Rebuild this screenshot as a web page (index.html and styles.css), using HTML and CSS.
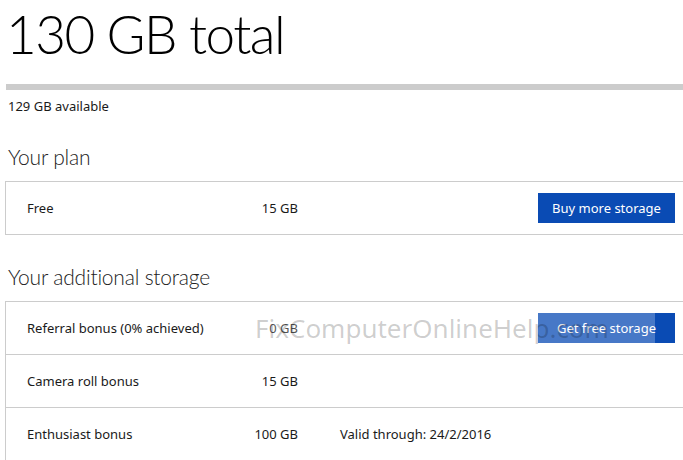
FILE: index.html
```html
<!DOCTYPE html>
<html lang="en">
<head>
  <meta charset="UTF-8">
  <title>Storage</title>
  <link rel="stylesheet" href="styles.css">
</head>
<body>
  <h1 class="total">130 GB total</h1>
  <div class="meter"><div class="meter-fill"></div></div>
  <p class="available">129 GB available</p>

  <h2 class="section-title">Your plan</h2>
  <div class="box">
    <div class="row">
      <span class="label">Free</span>
      <span class="amount">15 GB</span>
      <span class="extra"></span>
      <button class="action">Buy more storage</button>
    </div>
  </div>

  <h2 class="section-title">Your additional storage</h2>
  <div class="box">
    <div class="row">
      <span class="label">Referral bonus (0% achieved)</span>
      <span class="amount">0 GB</span>
      <span class="extra"></span>
      <button class="action">Get free storage</button>
    </div>
    <div class="row">
      <span class="label">Camera roll bonus</span>
      <span class="amount">15 GB</span>
      <span class="extra"></span>
    </div>
    <div class="row">
      <span class="label">Enthusiast bonus</span>
      <span class="amount">100 GB</span>
      <span class="extra">Valid through: 24/2/2016</span>
    </div>
  </div>

  <div class="watermark">FixComputerOnlineHelp.com</div>
</body>
</html>
```

FILE: styles.css
```css
html, body {
  overflow: hidden;
}

body {
  margin: 0;
  width: 683px;
  height: 460px;
  position: relative;
  font-family: "Noto Sans", "Open Sans", sans-serif;
  color: #1a1a1a;
  background: #fff;
}

.total {
  margin: 0;
  padding: 2px 0 0 6px;
  font-family: "Lato Light", "Lato", sans-serif;
  font-size: 53px;
  font-weight: 300;
  line-height: 64px;
  letter-spacing: -1.5px;
  color: #000;
}

.meter {
  margin: 18px 0 0 6px;
  height: 6px;
  width: 700px;
  background: #cccccc;
}

.available {
  margin: 7px 0 0 8px;
  font-size: 13px;
  line-height: 18px;
}

.section-title {
  margin: 28px 0 10px 8px;
  font-family: "Lato Light", "Lato", sans-serif;
  font-size: 21px;
  font-weight: 300;
  line-height: 28px;
  letter-spacing: -0.2px;
  color: #222;
}

.box {
  margin-left: 5px;
  width: 680px;
  border: 1px solid #cccccc;
}

.row {
  display: grid;
  grid-template-columns: 221px 50px 240px 137px;
  align-items: center;
  height: 52px;
  padding-left: 21px;
  font-size: 13px;
}

.row + .row {
  border-top: 1px solid #cccccc;
}

.amount {
  text-align: right;
  white-space: nowrap;
}

.extra {
  padding-left: 42px;
}

.action {
  height: 30px;
  border: none;
  background: #0a4bb4;
  color: #fff;
  font-family: inherit;
  font-size: 13px;
  padding: 0;
  cursor: pointer;
}

.watermark {
  position: absolute;
  left: 255px;
  top: 311px;
  width: 400px;
  height: 34px;
  background: rgba(255, 255, 255, 0.25);
  color: rgba(0, 0, 0, 0.2);
  font-size: 26px;
  line-height: 34px;
  white-space: nowrap;
  overflow: hidden;
}
```
